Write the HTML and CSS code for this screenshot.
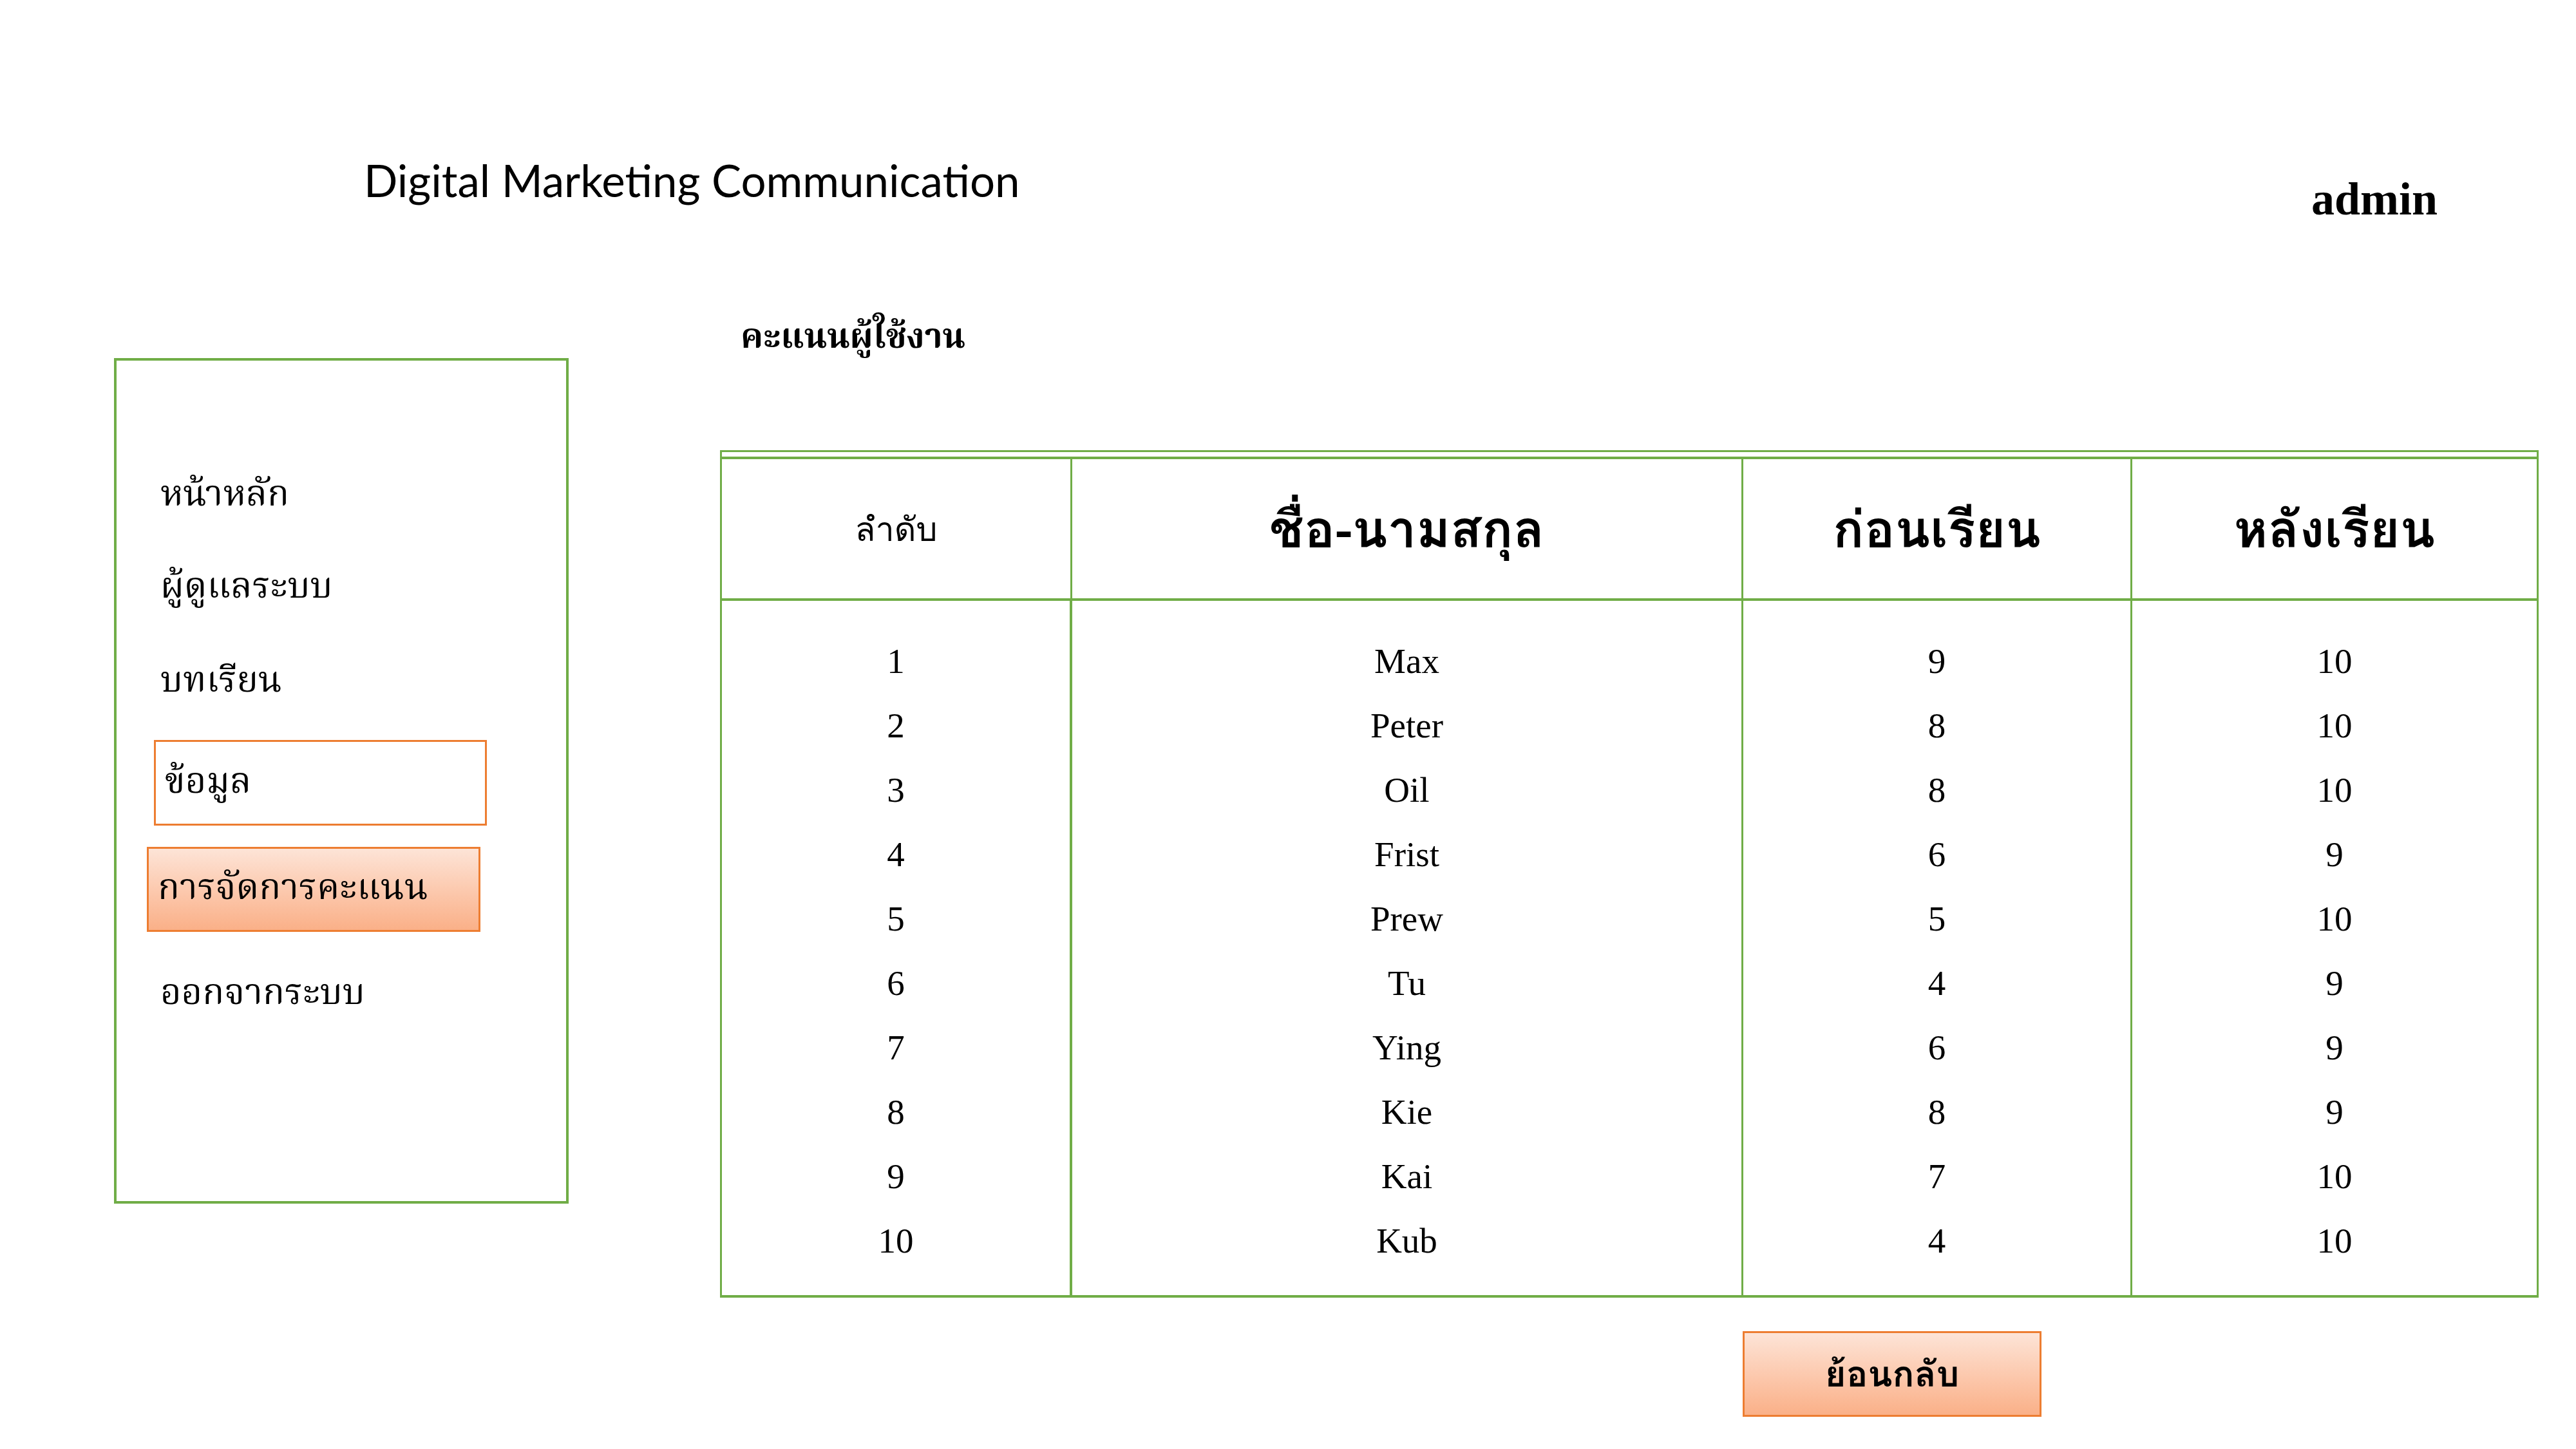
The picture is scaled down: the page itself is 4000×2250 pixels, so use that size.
FILE: index.html
```html
<!DOCTYPE html>
<html lang="th">
<head>
<meta charset="utf-8">
<title>คะแนนผู้ใช้งาน</title>
<link rel="stylesheet" href="styles.css">
</head>
<body>
<div class="page">
  <header class="topbar">
    <div class="brand">Digital Marketing Communication</div>
    <div class="user">admin</div>
  </header>
  <div class="main">
    <nav class="sidebar">
      <a class="nav-item">หน้าหลัก</a>
      <a class="nav-item">ผู้ดูแลระบบ</a>
      <a class="nav-item nav-lesson">บทเรียน</a>
      <a class="nav-item nav-outline">ข้อมูล</a>
      <a class="nav-item nav-active">การจัดการคะแนน</a>
      <a class="nav-item">ออกจากระบบ</a>
    </nav>
    <section class="content">
      <h1 class="page-title">คะแนนผู้ใช้งาน</h1>
      <div class="table-frame">
        <table class="scores">
          <colgroup>
            <col class="c-no">
            <col class="c-name">
            <col class="c-pre">
            <col class="c-post">
          </colgroup>
          <thead>
            <tr>
              <th class="th-small">ลำดับ</th>
              <th>ชื่อ-นามสกุล</th>
              <th>ก่อนเรียน</th>
              <th>หลังเรียน</th>
            </tr>
          </thead>
          <tbody>
            <tr><td>1</td><td>Max</td><td>9</td><td>10</td></tr>
            <tr><td>2</td><td>Peter</td><td>8</td><td>10</td></tr>
            <tr><td>3</td><td>Oil</td><td>8</td><td>10</td></tr>
            <tr><td>4</td><td>Frist</td><td>6</td><td>9</td></tr>
            <tr><td>5</td><td>Prew</td><td>5</td><td>10</td></tr>
            <tr><td>6</td><td>Tu</td><td>4</td><td>9</td></tr>
            <tr><td>7</td><td>Ying</td><td>6</td><td>9</td></tr>
            <tr><td>8</td><td>Kie</td><td>8</td><td>9</td></tr>
            <tr><td>9</td><td>Kai</td><td>7</td><td>10</td></tr>
            <tr><td>10</td><td>Kub</td><td>4</td><td>10</td></tr>
          </tbody>
        </table>
      </div>
      <div class="actions">
        <button class="back-btn" type="button">ย้อนกลับ</button>
      </div>
    </section>
  </div>
</div>
</body>
</html>
```

FILE: styles.css
```css
* { box-sizing: border-box; }
html, body { margin: 0; padding: 0; background: #ffffff; }
body {
  width: 4000px;
  height: 2250px;
  overflow: hidden;
  color: #000000;
  font-family: "Liberation Serif", serif;
}
.page { width: 4000px; height: 2250px; }

.topbar {
  display: flex;
  justify-content: space-between;
  align-items: flex-start;
  height: 450px;
  padding: 0 215px 0 565px;
}
.brand {
  font-family: Lato, "Liberation Sans", sans-serif;
  font-size: 69px;
  line-height: 80px;
  margin-top: 240px;
}
.user {
  font-family: "Liberation Serif", serif;
  font-weight: 700;
  font-size: 72px;
  line-height: 80px;
  margin-top: 269px;
}

.main {
  display: flex;
  align-items: flex-start;
  padding-left: 177px;
}
.sidebar {
  width: 706px;
  height: 1313px;
  margin-top: 106px;
  border: 4px solid #70AD47;
  display: flex;
  flex-direction: column;
  align-items: flex-start;
  gap: 43px;
  padding-top: 160px;
}
.nav-item {
  display: flex;
  align-items: center;
  height: 100px;
  padding-left: 68px;
  font-family: "Norasi", "Kinnari", "Noto Serif Thai", "Loma", serif;
  font-size: 56px;
  color: #000000;
  text-decoration: none;
}
.nav-lesson { margin-top: 3px; margin-bottom: -3px; }
.nav-outline {
  margin-left: 58px;
  width: 517px;
  height: 133px;
  padding-left: 14px;
  border: 3px solid #ED7D31;
}
.nav-active {
  margin-left: 47px;
  margin-top: -10px;
  margin-bottom: 4px;
  width: 518px;
  height: 132px;
  padding-left: 14px;
  border: 3px solid #ED7D31;
  background: linear-gradient(to bottom, #FDE4D7 0%, #FCC7AB 55%, #FAB088 100%);
}

.content {
  margin-left: 235px;
  width: 2824px;
}
.page-title {
  margin: 0;
  height: 249px;
  padding: 16px 0 0 32px;
  font-family: "Norasi", "Kinnari", "Noto Serif Thai", "Loma", serif;
  font-weight: 700;
  font-size: 53px;
  line-height: 120px;
}

.table-frame {
  border: 3px solid #70AD47;
  border-bottom: none;
  padding-top: 7px;
}
.scores {
  width: 100%;
  table-layout: fixed;
  border-collapse: separate;
  border-spacing: 0;
  border-top: 4px solid #70AD47;
  border-bottom: 4px solid #70AD47;
}
.c-no { width: 544px; }
.c-name { width: 1042px; }
.c-pre { width: 604px; }
.c-post { width: auto; }

.scores th {
  height: 220px;
  border-bottom: 4px solid #70AD47;
  border-right: 3px solid #70AD47;
  font-family: "Garuda", "Loma", "Noto Sans Thai", sans-serif;
  font-weight: 700;
  font-size: 80px;
  text-align: center;
  vertical-align: middle;
  padding: 0;
}
.scores th.th-small {
  font-weight: 400;
  font-size: 52px;
}
.scores th:last-child { border-right: none; }

.scores td {
  height: 100px;
  padding: 0;
  border-right: 3px solid #70AD47;
  font-family: "Liberation Serif", serif;
  font-size: 55px;
  text-align: center;
  vertical-align: middle;
}
.scores td:first-child { border-right-width: 4px; }
.scores td:last-child { border-right: none; }
.scores tbody tr:first-child td { height: 143px; padding-top: 43px; }
.scores tbody tr:last-child td { height: 135px; padding-bottom: 35px; }

.actions {
  padding-left: 1588px;
  padding-top: 52px;
}
.back-btn {
  width: 464px;
  height: 133px;
  border: 3px solid #ED7D31;
  border-radius: 0;
  background: linear-gradient(to bottom, #FDE4D7 0%, #FCC7AB 55%, #FAB088 100%);
  font-family: "Garuda", "Loma", "Noto Sans Thai", sans-serif;
  font-weight: 700;
  font-size: 56px;
  color: #000000;
  padding: 0;
}
```
